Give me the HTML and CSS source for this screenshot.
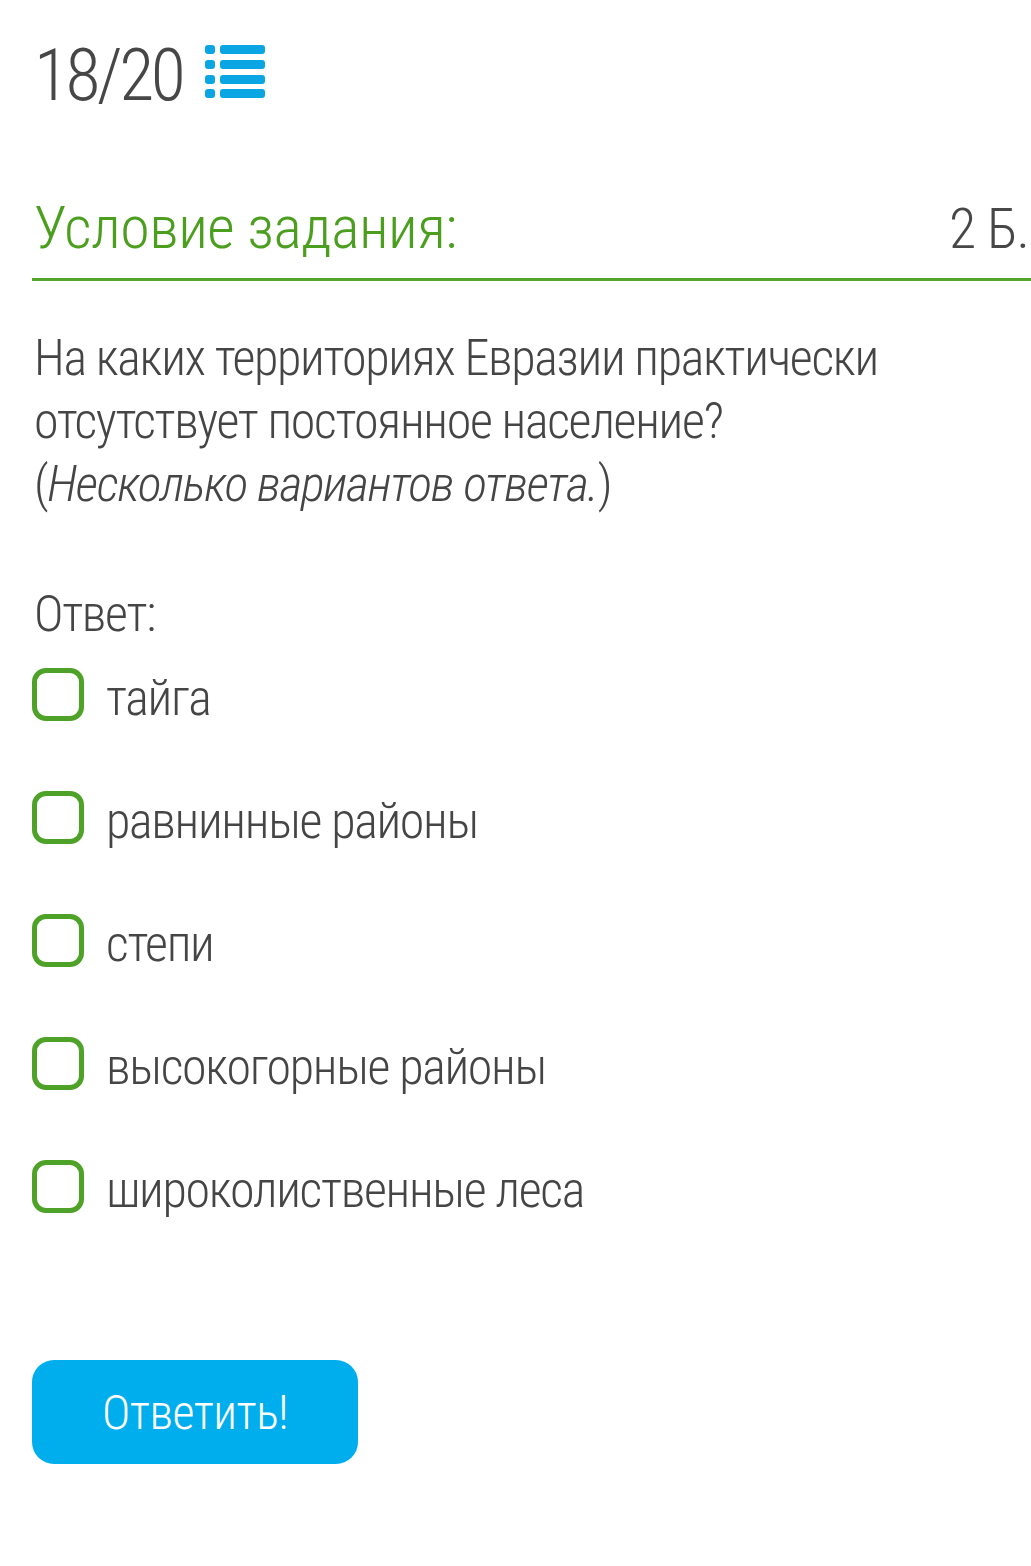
FILE: index.html
```html
<!DOCTYPE html>
<html lang="ru">
<head>
<meta charset="utf-8">
<link rel="stylesheet" href="styles.css">
</head>
<body>
<div class="page">
  <div class="counter">
    <span class="counter-num">18/20</span>
    <svg class="list-icon" width="60" height="56" viewBox="0 0 60 56">
      <rect x="0" y="1" width="10" height="9" rx="3" fill="#0aa5e3"/>
      <rect x="15" y="1" width="45" height="9" rx="3" fill="#0aa5e3"/>
      <rect x="0" y="16" width="10" height="9" rx="3" fill="#0aa5e3"/>
      <rect x="15" y="16" width="45" height="9" rx="3" fill="#0aa5e3"/>
      <rect x="0" y="31" width="10" height="9" rx="3" fill="#0aa5e3"/>
      <rect x="15" y="31" width="45" height="9" rx="3" fill="#0aa5e3"/>
      <rect x="0" y="45" width="10" height="9" rx="3" fill="#0aa5e3"/>
      <rect x="15" y="45" width="45" height="9" rx="3" fill="#0aa5e3"/>
    </svg>
  </div>
  <div class="task-head">
    <span class="task-title">Условие задания:</span>
    <span class="task-points">2 Б.</span>
  </div>
  <p class="question">На каких территориях Евразии практически отсутствует постоянное население?<br>(<i>Несколько вариантов ответа.</i>)</p>
  <div class="answer-label">Ответ:</div>
  <ul class="options">
    <li class="option"><span class="box"></span><span class="opt-text">тайга</span></li>
    <li class="option"><span class="box"></span><span class="opt-text">равнинные районы</span></li>
    <li class="option"><span class="box"></span><span class="opt-text">степи</span></li>
    <li class="option"><span class="box"></span><span class="opt-text">высокогорные районы</span></li>
    <li class="option"><span class="box"></span><span class="opt-text">широколиственные леса</span></li>
  </ul>
  <button class="submit">Ответить!</button>
</div>
</body>
</html>
```
FILE: styles.css
```css
html, body {
  margin: 0;
  padding: 0;
  background: #ffffff;
}
body {
  font-family: "Roboto Condensed", Roboto, "Liberation Sans", sans-serif;
  font-weight: 280;
  font-stretch: condensed;
  color: #454545;
}
.page {
  padding: 34px 0 0 32px;
}
.counter {
  display: flex;
  align-items: center;
  gap: 23px;
  height: 84px;
  padding-left: 2px;
}
.counter-num {
  font-size: 72px;
  line-height: 84px;
  letter-spacing: -3.5px;
  color: #474747;
}
.list-icon {
  display: block;
  margin-top: -8px;
}
.task-head {
  display: flex;
  justify-content: space-between;
  align-items: baseline;
  margin-top: 74px;
  padding: 0 2px 0 2px;
  height: 86px;
  border-bottom: 3px solid #54a52b;
}
.task-title {
  color: #4c9f1e;
  font-size: 60px;
  line-height: 72px;
  letter-spacing: -0.5px;
}
.task-points {
  font-size: 56px;
  line-height: 72px;
  letter-spacing: -1px;
  color: #474747;
}
.question {
  margin: 46px 0 0 0;
  padding-left: 2px;
  font-size: 50px;
  line-height: 63px;
  letter-spacing: -1.3px;
  padding-right: 40px;
}
.answer-label {
  margin-top: 68px;
  padding-left: 2px;
  font-size: 50px;
  line-height: 60px;
  letter-spacing: -1.3px;
}
.options {
  list-style: none;
  margin: 24px 0 0 0;
  padding: 0;
  display: flex;
  flex-direction: column;
  gap: 70px;
}
.option {
  display: flex;
  align-items: center;
  gap: 22px;
  height: 53px;
}
.box {
  box-sizing: border-box;
  width: 52px;
  height: 53px;
  border: 5px solid #4ea227;
  border-radius: 14px;
  flex: none;
}
.opt-text {
  font-size: 50px;
  line-height: 60px;
  letter-spacing: -1.3px;
  margin-top: 6px;
}
.submit {
  margin-top: 147px;
  width: 326px;
  height: 104px;
  border: none;
  border-radius: 22px;
  background: #00aeed;
  color: #ffffff;
  font-family: inherit;
  font-weight: 280;
  font-stretch: condensed;
  font-size: 48px;
  letter-spacing: -0.5px;
  padding: 0;
}
```
